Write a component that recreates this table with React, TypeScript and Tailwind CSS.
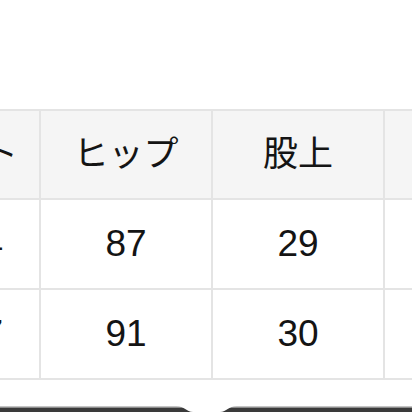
const headers = ["ウエスト", "ヒップ", "股上", ""];
const rows = [
  ["64", "87", "29", ""],
  ["67", "91", "30", ""],
];

function Cell({ children, head, first }: { children: string; head?: boolean; first?: boolean }) {
  return (
    <div
      className={
        "flex items-center " +
        (first ? "justify-end " : "justify-center ") +
        (head ? "bg-[#f5f5f5] h-[87px] " : "bg-white h-[88px] ") +
        (first ? (head ? "pr-[21px]" : "pr-[36px]") : "")
      }
    >
      <span className={head ? "text-[35px]" : "text-[37px]"}>{children}</span>
    </div>
  );
}

export default function App() {
  return (
    <div
      className="w-[412px] h-[412px] overflow-hidden bg-white flex flex-col text-[#141414]"
      style={{ fontFamily: '"Liberation Sans", "Noto Sans CJK JP", sans-serif' }}
    >
      <div className="mt-[109px] ml-[-133px] w-max grid grid-cols-[170px_170px_170px_170px] gap-[2px] p-[2px] bg-[#e4e4e4]">
        {headers.map((h, i) => (
          <Cell key={"h" + i} head first={i === 0}>
            {h}
          </Cell>
        ))}
        {rows.map((r, ri) =>
          r.map((c, ci) => (
            <Cell key={ri + "-" + ci} first={ci === 0}>
              {c}
            </Cell>
          ))
        )}
      </div>
      <svg className="mt-auto block" width="412" height="6" viewBox="0 0 412 6">
        <rect x="0" y="0" width="412" height="1.5" fill="#c4c4c4" />
        <rect x="0" y="1.5" width="412" height="4.5" fill="#3a3a3a" />
        <path d="M176 0 C185 0 186 6 193 6 L220 6 C227 6 228 0 237 0 Z" fill="#ffffff" />
      </svg>
    </div>
  );
}
